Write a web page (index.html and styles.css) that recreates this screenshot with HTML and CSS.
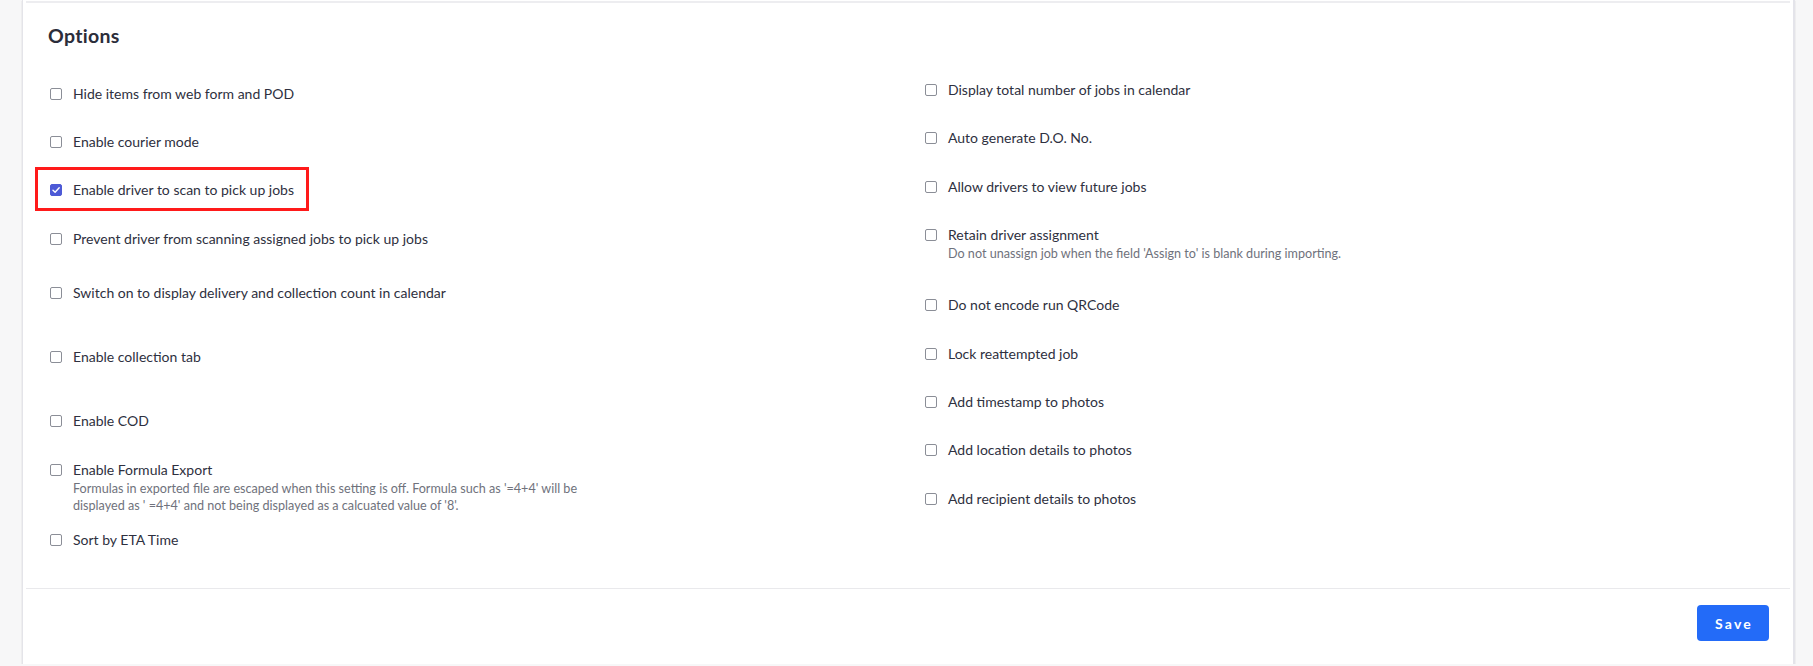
FILE: index.html
```html
<!DOCTYPE html>
<html lang="en">
<head>
<meta charset="utf-8">
<title>Options</title>
<link rel="stylesheet" href="styles.css">
</head>
<body>
<div class="page">
  <section class="card">
    <hr class="rule rule--top">
    <div class="card-body">
      <h2 class="title">Options</h2>
      <div class="options">
        <div class="col col--left">
          <div class="opt"><label class="opt-label"><span class="cb"></span><span>Hide items from web form and POD</span></label></div>
          <div class="opt"><label class="opt-label"><span class="cb"></span><span>Enable courier mode</span></label></div>
          <div class="opt"><label class="opt-label highlight"><span class="cb cb--checked"><svg viewBox="0 0 12 12" width="12" height="12"><path d="M3 6.2 L5.1 8.2 L9.2 3.8" fill="none" stroke="#fff" stroke-width="1.4" stroke-linecap="round" stroke-linejoin="round"/></svg></span><span>Enable driver to scan to pick up jobs</span></label></div>
          <div class="opt opt--md"><label class="opt-label"><span class="cb"></span><span>Prevent driver from scanning assigned jobs to pick up jobs</span></label></div>
          <div class="opt opt--lg"><label class="opt-label"><span class="cb"></span><span>Switch on to display delivery and collection count in calendar</span></label></div>
          <div class="opt opt--lg"><label class="opt-label"><span class="cb"></span><span>Enable collection tab</span></label></div>
          <div class="opt"><label class="opt-label"><span class="cb"></span><span>Enable COD</span></label></div>
          <div class="opt opt--desc"><label class="opt-label"><span class="cb"></span><span>Enable Formula Export</span></label>
            <p class="opt-desc">Formulas in exported file are escaped when this setting is off. Formula such as '=4+4' will be<br>displayed as ' =4+4' and not being displayed as a calcuated value of '8'.</p></div>
          <div class="opt"><label class="opt-label"><span class="cb"></span><span>Sort by ETA Time</span></label></div>
        </div>
        <div class="col col--right">
          <div class="opt"><label class="opt-label"><span class="cb"></span><span>Display total number of jobs in calendar</span></label></div>
          <div class="opt"><label class="opt-label"><span class="cb"></span><span>Auto generate D.O. No.</span></label></div>
          <div class="opt"><label class="opt-label"><span class="cb"></span><span>Allow drivers to view future jobs</span></label></div>
          <div class="opt opt--desc"><label class="opt-label"><span class="cb"></span><span>Retain driver assignment</span></label>
            <p class="opt-desc">Do not unassign job when the field 'Assign to' is blank during importing.</p></div>
          <div class="opt"><label class="opt-label"><span class="cb"></span><span>Do not encode run QRCode</span></label></div>
          <div class="opt"><label class="opt-label"><span class="cb"></span><span>Lock reattempted job</span></label></div>
          <div class="opt"><label class="opt-label"><span class="cb"></span><span>Add timestamp to photos</span></label></div>
          <div class="opt"><label class="opt-label"><span class="cb"></span><span>Add location details to photos</span></label></div>
          <div class="opt"><label class="opt-label"><span class="cb"></span><span>Add recipient details to photos</span></label></div>
        </div>
      </div>
    </div>
    <hr class="rule">
    <div class="card-footer">
      <button class="btn-save" type="button">Save</button>
    </div>
  </section>
</div>
</body>
</html>
```

FILE: styles.css
```css
* { box-sizing: border-box; }

html, body {
  margin: 0;
  padding: 0;
  background: #f7f7f8;
  font-family: "Lato", "Liberation Sans", sans-serif;
  color: #2e3040;
}

.page {
  padding-left: 22px;
  width: 1796px;
}

.card {
  width: 1773px;
  background: #fff;
  border-left: 1px solid #e4e4e9;
  border-right: 2px solid #e4e4ea;
  box-shadow: 0 1px 1px rgba(0, 0, 0, 0.22);
  padding-top: 1px;
}

.rule {
  border: 0;
  height: 1px;
  background: #e9e9ec;
  margin: 0 3px;
}

.rule--top {
  height: 2px;
  background: #ededf0;
}

.card-body {
  padding: 21px 26px 10px 25px;
}

.title {
  margin: 0;
  font-size: 19.5px;
  line-height: 24px;
  font-weight: 700;
  color: #2b2d3a;
  letter-spacing: 0.3px;
}

.options {
  display: grid;
  grid-template-columns: 875px 1fr;
  margin-top: 32px;
  padding-left: 2px;
}

.col--left {
  padding-top: 3.7px;
}

.opt {
  height: 48.4px;
}

.opt--md { height: 54px; }
.opt--lg { height: 64.3px; }
.opt--desc { height: 70px; }

.opt-label {
  position: relative;
  display: inline-flex;
  align-items: center;
  gap: 11px;
  font-size: 14px;
  line-height: 20px;
  color: #2e3040;
}

.cb {
  flex: none;
  width: 12px;
  height: 12px;
  border: 1px solid #8b8e97;
  border-radius: 2px;
  background: #fff;
  display: flex;
  align-items: center;
  justify-content: center;
}

.cb--checked {
  background: #4d5ad6;
  border-color: #4d5ad6;
}

.cb--checked svg {
  display: block;
  flex: none;
}

.opt-desc {
  margin: 0 0 0 23px;
  font-size: 12.6px;
  line-height: 17px;
  color: #6f727c;
}

.highlight::after {
  content: "";
  position: absolute;
  left: -15px;
  right: -15px;
  top: -13.5px;
  bottom: -10.5px;
  border: 3.5px solid #ff1a1a;
  pointer-events: none;
}

.card-footer {
  display: flex;
  justify-content: flex-end;
  padding: 16px 24px 23px 0;
}

.btn-save {
  width: 72px;
  height: 36px;
  border: 0;
  border-radius: 4px;
  background: #236bf8;
  color: #fff;
  font-family: "Lato", "Liberation Sans", sans-serif;
  font-size: 14px;
  font-weight: 700;
  letter-spacing: 2.2px;
  padding: 0 0 0 2px;
}
```
